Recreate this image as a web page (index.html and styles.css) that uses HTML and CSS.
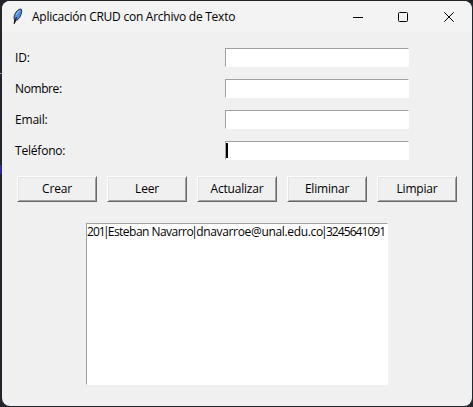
FILE: index.html
```html
<!DOCTYPE html>
<html lang="es">
<head>
<meta charset="utf-8">
<title>Aplicación CRUD con Archivo de Texto</title>
<link rel="stylesheet" href="styles.css">
</head>
<body>
<main class="window">
  <header class="titlebar">
    <svg class="feather" width="12" height="17" viewBox="0 0 12 17">
      <path d="M2.2 15.5L2.6 12C1.2 9.5 2.5 5.5 5.2 2.8C7 1.1 8.8.7 9.5 1.4C10.2 4 8.8 9 6 11.5L3.6 12.6Z" fill="#4b8fe0" stroke="#222" stroke-width=".9"/>
      <path d="M4.5 9L2.4 15.5" fill="none" stroke="#111" stroke-width="1"/>
      <path d="M7.2 2.8L4 7" fill="none" stroke="#a5cdfa" stroke-width=".9"/>
    </svg>
    <h1 class="title">Aplicación CRUD con Archivo de Texto</h1>
    <div class="controls">
      <svg class="minimize" width="10" height="10" viewBox="0 0 10 10"><path d="M0 5.5H10" stroke="#000"/></svg>
      <svg width="10" height="10" viewBox="0 0 10 10"><rect x=".5" y=".5" width="9" height="9" rx="1" fill="none" stroke="#000"/></svg>
      <svg width="10" height="10" viewBox="0 0 10 10"><path d="M.3.3L9.7 9.7M9.7.3L.3 9.7" stroke="#000"/></svg>
    </div>
  </header>
  <form class="form">
    <div class="row"><span class="label">ID:</span><span class="entry"></span></div>
    <div class="row"><span class="label nombre">Nombre:</span><span class="entry"></span></div>
    <div class="row"><span class="label">Email:</span><span class="entry"></span></div>
    <div class="row"><span class="label">Teléfono:</span><span class="entry"><i class="caret"></i></span></div>
  </form>
  <div class="buttons">
    <button class="button">Crear</button>
    <button class="button">Leer</button>
    <button class="button">Actualizar</button>
    <button class="button">Eliminar</button>
    <button class="button">Limpiar</button>
  </div>
  <div class="list"><div class="item"><span class="digits">201</span><span class="pipe">|</span><span class="name">Esteban Navarro</span><span class="pipe">|</span><span class="mail">dnavarroe@unal.edu.co</span><span class="pipe">|</span><span class="digits">3245641091</span></div></div>
</main>
</body>
</html>
```
FILE: styles.css
```css
* { box-sizing: border-box; }
body {
  margin: 0;
  height: 407px;
  padding: 1px 1px 1px 2px;
  overflow: hidden;
  background: linear-gradient(#1f2126, #1f2126) 0 0 / 100% 2px no-repeat,
    linear-gradient(#9299aa, #9299aa) 0 73px / 2px 1px no-repeat,
    linear-gradient(#2a2c9c, #2a2c9c) 0 165px / 2px 9px no-repeat, #22252b;
  font: 12px/16px "Open Sans", "Noto Sans", sans-serif;
  color: #000;
}
.window {
  width: 470px;
  height: 405px;
  border-radius: 8px;
  overflow: hidden;
  background: #f0f0f0;
}
.titlebar {
  display: flex;
  align-items: center;
  height: 31px;
  padding-left: 10px;
  background: #f3f3f3;
}
.feather { margin-right: 8px; }
.title { margin: 0; font-size: 12px; font-weight: 400; letter-spacing: -.25px; white-space: nowrap; }
.controls { display: flex; gap: 36px; margin: 0 18px 0 auto; }
.controls svg { display: block; }
.controls .minimize { margin-right: -1px; }
.form { display: grid; gap: 12px; padding: 16px 0 0 13px; }
.row { display: grid; grid-template-columns: 210px 184px; height: 19px; align-items: center; }
.label { letter-spacing: -.2px; }
.nombre { letter-spacing: -.4px; }
.entry {
  height: 19px;
  padding: 1px 0 0 0;
  background: #fff;
  border: 1px solid #fff;
  border-top-color: #a0a0a0;
  border-left-color: #a0a0a0;
}
.caret { display: block; width: 2px; height: 15px; background: #000; }
.buttons { display: flex; gap: 10px; padding: 15px 0 0 15px; margin-top: 1px; }
.button {
  width: 80px;
  height: 26px;
  padding: 0;
  border: 1px solid #fff;
  border-right-color: #696969;
  border-bottom-color: #696969;
  box-shadow: inset 1px 1px #e3e3e3, inset -1px -1px #a0a0a0;
  background: #f0f0f0;
  color: #000;
  font: inherit;
  letter-spacing: -.2px;
}
.list {
  width: 302px;
  height: 162px;
  margin: 21px 0 0 84px;
  background: #fff;
  border: 1px solid #fff;
  border-top-color: #a0a0a0;
  border-left-color: #a0a0a0;
  white-space: nowrap;
}
.item { display: flex; }
.digits { letter-spacing: -.93px; }
.name { letter-spacing: -.53px; }
.mail { letter-spacing: -.33px; }
.pipe { display: flex; justify-content: center; width: 3px; }
```
